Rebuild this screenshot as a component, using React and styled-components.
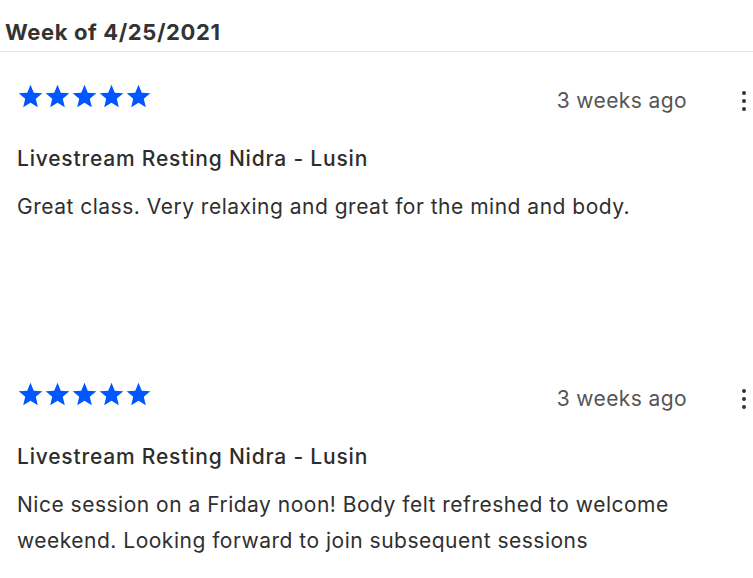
import React from "react";
import styled, { createGlobalStyle } from "styled-components";

const GlobalStyle = createGlobalStyle`
  html, body { margin: 0; padding: 0; background: #ffffff; }
  body { font-family: Inter, "Noto Sans", sans-serif; color: #2f2f2f; }
`;

const Page = styled.div`
  width: 753px;
`;

const WeekHeader = styled.h2`
  margin: 0;
  padding: 17px 0 4px 5px;
  font-size: 22px;
  line-height: 30px;
  font-weight: 700;
  letter-spacing: 0.6px;
  color: #333333;
  border-bottom: 1px solid #e8e8e8;
`;

const Card = styled.article`
  min-height: 298px;
  box-sizing: border-box;
  padding: 31px 0 0 17px;
  display: flex;
  flex-direction: column;
`;

const TopRow = styled.div`
  display: flex;
  align-items: center;
  height: 30px;
`;

const Stars = styled.div`
  display: flex;
  flex: 1;
  margin-top: -3px;
`;

const TimeAgo = styled.span`
  font-size: 21px;
  letter-spacing: 0.4px;
  color: #555555;
  margin-top: 4px;
`;

const MoreButton = styled.button`
  width: 18px;
  height: 30px;
  margin-left: 48px;
  padding: 0;
  border: 0;
  background: transparent;
  display: flex;
  flex-direction: column;
  align-items: center;
  justify-content: center;
  gap: 4px;
  margin-top: 6px;
`;

const Dot = styled.span`
  width: 4px;
  height: 4px;
  border-radius: 50%;
  background: #333333;
`;

const Title = styled.h3`
  margin: 31px 0 0;
  font-size: 21px;
  line-height: 30px;
  font-weight: 500;
  letter-spacing: 0.8px;
  color: #2d2d2d;
`;

const Body = styled.p`
  margin: 15px 0 0;
  padding-right: 20px;
  font-size: 21px;
  line-height: 36px;
  font-weight: 400;
  letter-spacing: 0.5px;
  color: #2f2f2f;
`;

const Star = () => (
  <svg width="27" height="27" viewBox="0 0 24 24" aria-hidden="true">
    <polygon
      fill="#0057ff"
      points="12,1.5 14.9,8.6 22.5,9.2 16.7,14.1 18.5,21.6 12,17.6 5.5,21.6 7.3,14.1 1.5,9.2 9.1,8.6"
    />
  </svg>
);

const reviews = [
  {
    id: 1,
    rating: 5,
    time: "3 weeks ago",
    title: "Livestream Resting Nidra - Lusin",
    text: "Great class. Very relaxing and great for the mind and body.",
  },
  {
    id: 2,
    rating: 5,
    time: "3 weeks ago",
    title: "Livestream Resting Nidra - Lusin",
    text:
      "Nice session on a Friday noon! Body felt refreshed to welcome weekend. Looking forward to join subsequent sessions",
  },
];

export default function App() {
  return (
    <Page>
      <GlobalStyle />
      <WeekHeader>Week of 4/25/2021</WeekHeader>
      {reviews.map((r) => (
        <Card key={r.id}>
          <TopRow>
            <Stars>
              {Array.from({ length: r.rating }).map((_, i) => (
                <Star key={i} />
              ))}
            </Stars>
            <TimeAgo>{r.time}</TimeAgo>
            <MoreButton aria-label="More options">
              <Dot />
              <Dot />
              <Dot />
            </MoreButton>
          </TopRow>
          <Title>{r.title}</Title>
          <Body>{r.text}</Body>
        </Card>
      ))}
    </Page>
  );
}
